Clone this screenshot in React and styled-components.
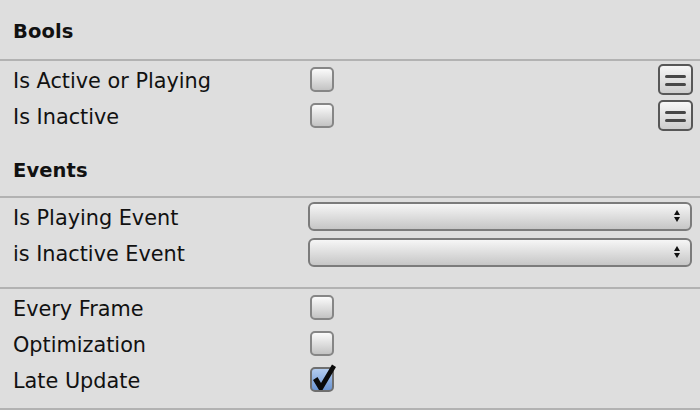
import React from "react";
import styled, { createGlobalStyle } from "styled-components";

const GlobalStyle = createGlobalStyle`
  html, body {
    margin: 0;
    padding: 0;
    background: #dedede;
  }
  body {
    font-family: "DejaVu Sans", "Liberation Sans", sans-serif;
    color: #111;
  }
`;

const Panel = styled.div`
  width: 700px;
  height: 410px;
  background: #dedede;
  overflow: hidden;
`;

const Header = styled.div`
  box-sizing: border-box;
  height: ${(p) => p.$height}px;
  padding-top: ${(p) => p.$top}px;
  padding-left: 13px;
  display: flex;
  align-items: center;
  font-weight: bold;
  font-size: 19.5px;
  letter-spacing: 0.1px;
`;

const Divider = styled.div`
  height: 2px;
  background: #b2b2b2;
`;

const Spacer = styled.div`
  height: ${(p) => p.$h}px;
`;

const Row = styled.div`
  box-sizing: border-box;
  height: 36px;
  display: grid;
  grid-template-columns: ${(p) => p.$labelWidth}px 1fr auto;
  align-items: center;
  padding-left: 13px;
  padding-right: ${(p) => p.$right}px;
`;

const Label = styled.span`
  font-size: 20.8px;
  line-height: 24px;
  padding-top: 3px;
  white-space: nowrap;
`;

const Box = styled.div`
  position: relative;
  box-sizing: border-box;
  width: 24px;
  height: 25px;
  border-radius: 5px;
  border: 2px solid ${(p) => (p.$checked ? "#6f6f6f" : "#868686")};
  background: ${(p) =>
    p.$checked
      ? "linear-gradient(#b4cdf0, #6a94d2)"
      : "linear-gradient(#fbfbfb, #c3c3c3)"};

  svg {
    position: absolute;
    left: 0px;
    top: -5px;
  }
`;

const Checkbox = ({ checked }) => (
  <Box $checked={checked}>
    {checked && (
      <svg width="26" height="28" viewBox="0 0 26 28">
        <path
          d="M1 16 L5.5 13 L9 19 L20 0.5 L24 3 L10.5 26 L7 26 Z"
          fill="#0a0a0a"
        />
      </svg>
    )}
  </Box>
);

const EqualsButton = styled.div`
  box-sizing: border-box;
  width: 35px;
  height: 31px;
  border-radius: 5px;
  border: 2px solid #575757;
  background: linear-gradient(#f6f6f6, #cdcdcd);
  display: flex;
  flex-direction: column;
  align-items: center;
  justify-content: center;
  gap: 5px;
  padding-top: 2px;

  span {
    display: block;
    width: 21px;
    height: 3px;
    border-radius: 2px;
    background: #474747;
  }
`;

const Select = styled.div`
  box-sizing: border-box;
  height: 29px;
  border-radius: 6px;
  border: 2px solid #7b7b7b;
  background: linear-gradient(#f6f6f6, #c6c6c6);
  display: flex;
  align-items: center;
  justify-content: flex-end;
  padding-right: 10px;
`;

const Arrows = styled.div`
  display: flex;
  flex-direction: column;
  gap: 2px;

  i {
    width: 0;
    height: 0;
    border-left: 3.5px solid transparent;
    border-right: 3.5px solid transparent;
  }
  i:first-child {
    border-bottom: 5px solid #111;
  }
  i:last-child {
    border-top: 5px solid #111;
  }
`;

const Equals = () => (
  <EqualsButton>
    <span />
    <span />
  </EqualsButton>
);

const Dropdown = () => (
  <Select>
    <Arrows>
      <i />
      <i />
    </Arrows>
  </Select>
);

const BoolRow = ({ label }) => (
  <Row $labelWidth={297} $right={7}>
    <Label>{label}</Label>
    <Checkbox />
    <Equals />
  </Row>
);

const EventRow = ({ label }) => (
  <Row $labelWidth={295} $right={8}>
    <Label>{label}</Label>
    <Dropdown />
  </Row>
);

const OptionRow = ({ label, checked }) => (
  <Row $labelWidth={297} $right={7}>
    <Label>{label}</Label>
    <Checkbox checked={checked} />
  </Row>
);

export default function App() {
  return (
    <Panel>
      <GlobalStyle />
      <Header $height={59} $top={4}>Bools</Header>
      <Divider />
      <BoolRow label="Is Active or Playing" />
      <BoolRow label="Is Inactive" />
      <Header $height={63} $top={12}>Events</Header>
      <Divider />
      <EventRow label="Is Playing Event" />
      <EventRow label="is Inactive Event" />
      <Spacer $h={17} />
      <Divider />
      <OptionRow label="Every Frame" />
      <OptionRow label="Optimization" />
      <OptionRow label="Late Update" checked />
      <Spacer $h={11} />
      <Divider />
    </Panel>
  );
}
